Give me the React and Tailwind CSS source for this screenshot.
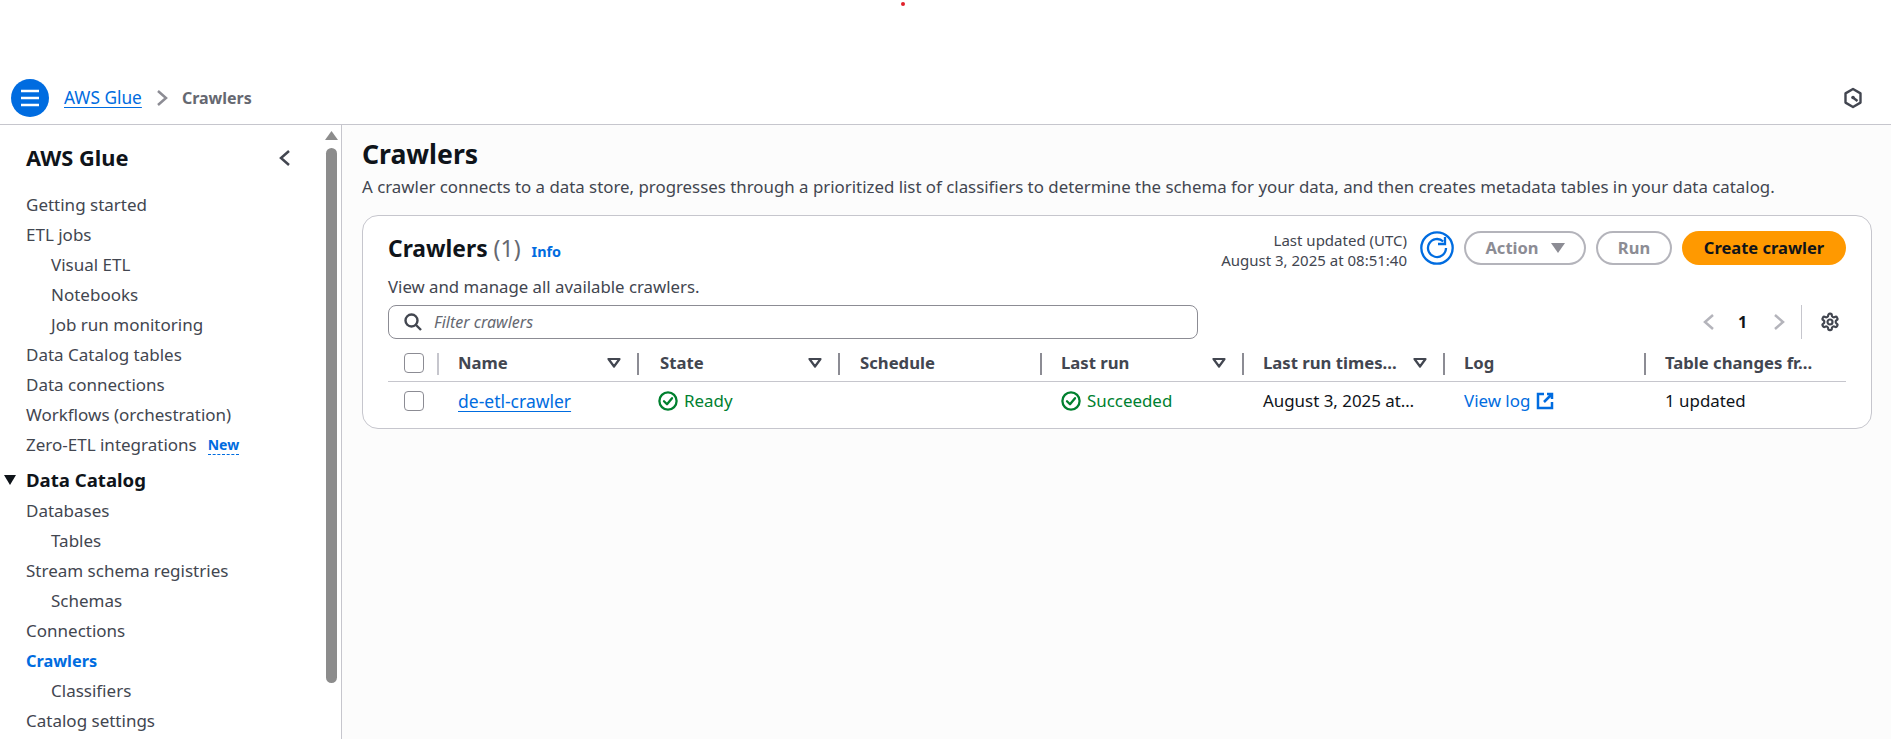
import React from "react";

const navTop = [
  { label: "Getting started" },
  { label: "ETL jobs" },
  { label: "Visual ETL", sub: true },
  { label: "Notebooks", sub: true },
  { label: "Job run monitoring", sub: true },
  { label: "Data Catalog tables" },
  { label: "Data connections" },
  { label: "Workflows (orchestration)" },
];

const navCatalog = [
  { label: "Databases" },
  { label: "Tables", sub: true },
  { label: "Stream schema registries" },
  { label: "Schemas", sub: true },
  { label: "Connections" },
  { label: "Crawlers", active: true },
  { label: "Classifiers", sub: true },
  { label: "Catalog settings" },
];

const columns = [
  { label: "Name", width: "w-[200px]", pad: "pl-[19px]", sort: true, light: true },
  { label: "State", width: "w-[201px]", pad: "pl-[21px]", sort: true },
  { label: "Schedule", width: "w-[202px]", pad: "pl-[20px]" },
  { label: "Last run", width: "w-[202px]", pad: "pl-[19px]", sort: true },
  { label: "Last run times…", width: "w-[201px]", pad: "pl-[19px]", sort: true },
  { label: "Log", width: "w-[201px]", pad: "pl-[19px]" },
  { label: "Table changes fr…", width: "w-[202px]", pad: "pl-[19px]" },
];

function NavItem({ item }) {
  return (
    <div
      className={`h-[30px] leading-[30px] whitespace-nowrap ${item.sub ? "pl-[51px]" : "pl-[26px]"} ${
        item.active ? "text-[16.3px] font-bold text-[#006ce0]" : "text-[17px] text-[#424650]"
      }`}
    >
      {item.label}
    </div>
  );
}

function Sep({ light }) {
  return <div className={`w-[2px] h-[22px] shrink-0 ${light ? "bg-[#c6c6cd]" : "bg-[#8c8c94]"}`} />;
}

function SortCaret() {
  return (
    <svg width="16" height="16" viewBox="0 0 16 16" className="shrink-0">
      <path d="M2.5 4h11L8 11.5z" fill="none" stroke="#424650" strokeWidth="2.2" strokeLinejoin="round" />
    </svg>
  );
}

function StatusOk({ children }) {
  return (
    <span className="flex items-center gap-[6px] text-[#00802f]">
      <svg width="20" height="20" viewBox="0 0 20 20" fill="none" stroke="#00802f" strokeWidth="2.3">
        <circle cx="10" cy="10" r="8.6" />
        <path d="M6 10.2l3 3 5-6" strokeLinecap="round" strokeLinejoin="round" />
      </svg>
      {children}
    </span>
  );
}

function Checkbox() {
  return <div className="w-5 h-5 rounded-[4px] border border-[#8c8c94] bg-white" />;
}

export default function App() {
  return (
    <div className="relative h-screen flex flex-col overflow-hidden bg-white font-['Noto_Sans',sans-serif] text-[#0f141a]">
      <div className="absolute left-[901px] top-[2px] w-1 h-1 rounded-full bg-[#e0202a]" />
      <div className="h-[72px] shrink-0" />

      <header className="h-[53px] shrink-0 flex items-center border-b border-[#c6c6cd] pl-[11px] pr-[28px]">
        <div className="w-[38px] h-[38px] rounded-full bg-[#006ce0] flex items-center justify-center">
          <svg width="18" height="18" viewBox="0 0 18 18" fill="none" stroke="white" strokeWidth="2.4">
            <path d="M0 2h18M0 9h18M0 16h18" />
          </svg>
        </div>
        <a className="ml-[15px] text-[17.3px] text-[#006ce0] underline underline-offset-[3px]">AWS Glue</a>
        <svg width="16" height="20" viewBox="0 0 16 20" fill="none" stroke="#8c8c94" strokeWidth="2.5" className="ml-[13px]">
          <path d="M3 3l8 7-8 7" />
        </svg>
        <span className="ml-[11px] text-base font-bold text-[#656871]">Crawlers</span>
        <svg width="20" height="22" viewBox="0 0 20 22" fill="none" stroke="#424650" strokeWidth="2.4" className="ml-auto">
          <path d="M10 2l7.5 4.4v9.2L10 20l-7.5-4.4V6.4z" strokeLinejoin="round" />
          <circle cx="10" cy="10.5" r="1.8" fill="#424650" stroke="none" />
          <path d="M10.5 11l4 3" />
        </svg>
      </header>

      <div className="flex-1 flex min-h-0">
        <nav className="w-[342px] shrink-0 flex border-r border-[#c6c6cd]">
          <div className="flex-1 min-w-0 pt-[16px]">
            <div className="flex items-center justify-between pl-[26px] pr-[31px] h-[34px]">
              <span className="text-[21.8px] font-bold">AWS Glue</span>
              <svg width="16" height="18" viewBox="0 0 16 18" fill="none" stroke="#424650" strokeWidth="2.5">
                <path d="M12 2L4 9l8 7" />
              </svg>
            </div>
            <div className="mt-[15px]">
              {navTop.map((item) => (
                <NavItem key={item.label} item={item} />
              ))}
              <div className="h-[30px] leading-[30px] text-[17px] pl-[26px] text-[#424650] flex items-center whitespace-nowrap">
                Zero-ETL integrations
                <span className="ml-[11px] text-sm font-bold text-[#006ce0] border-b border-dashed border-[#006ce0] leading-[18px]">
                  New
                </span>
              </div>
            </div>
            <div className="relative h-[32px] flex items-center pl-[26px] mt-[4px] text-[18.6px] font-bold">
              <svg width="12" height="10" viewBox="0 0 12 10" className="absolute left-[4px] top-[11px]" fill="#0f141a">
                <path d="M0 0h12L6 10z" />
              </svg>
              Data Catalog
            </div>
            {navCatalog.map((item) => (
              <NavItem key={item.label} item={item} />
            ))}
          </div>
          <div className="w-[15px] mr-[2px] shrink-0 flex flex-col items-center pt-[6px]">
            <svg width="13" height="9" viewBox="0 0 13 9" fill="#8c8c8c">
              <path d="M6.5 0l6.5 9H0z" />
            </svg>
            <div className="w-[11px] h-[535px] mt-[8px] rounded-[6px] bg-[#8c8c8c]" />
          </div>
        </nav>

        <main className="flex-1 min-w-0 bg-[#fcfcfc] pl-[20px] pr-[19px]">
          <h1 className="mt-[9px] text-[26.6px] leading-[40px] font-bold">Crawlers</h1>
          <p className="text-[16.85px] leading-[26px] text-[#424650] whitespace-nowrap">
            A crawler connects to a data store, progresses through a prioritized list of classifiers to determine the
            schema for your data, and then creates metadata tables in your data catalog.
          </p>
          <section className="mt-[15px] h-[214px] rounded-[16px] border border-[#c6c6cd] bg-white pl-[25px] pr-[25px] pt-[15px]">
            <div className="flex h-[46px]">
              <div className="flex items-baseline h-[32px]">
                <h2 className="text-[22.8px] leading-[32px] font-bold">Crawlers</h2>
                <span className="ml-[6px] text-[23px] text-[#656871]">(1)</span>
                <span className="ml-[11px] text-[14.4px] font-bold text-[#006ce0]">Info</span>
              </div>
              <div className="ml-auto flex items-start">
                <div className="-mt-px text-[15px] leading-[20px] text-[#424650] text-right whitespace-nowrap">
                  <div>Last updated (UTC)</div>
                  <div>August 3, 2025 at 08:51:40</div>
                </div>
                <svg width="34" height="34" viewBox="0 0 34 34" fill="none" stroke="#006ce0" className="ml-[13px]">
                  <circle cx="17" cy="17" r="15.7" strokeWidth="2.3" />
                  <path d="M26 17a9 9 0 1 1-2.8-6.5" strokeWidth="2.3" />
                  <path d="M25 6v7h-7" strokeWidth="2.3" />
                </svg>
                <div className="ml-[10px] w-[122px] h-[34px] rounded-full border-2 border-[#b4b4bb] flex items-center justify-center gap-[12px] text-[16.5px] font-bold text-[#8c8c94]">
                  Action
                  <svg width="14" height="10" viewBox="0 0 14 10" fill="#8c8c94">
                    <path d="M0 0h14L7 10z" />
                  </svg>
                </div>
                <div className="ml-[10px] w-[76px] h-[34px] rounded-full border-2 border-[#b4b4bb] flex items-center justify-center text-[16.5px] font-bold text-[#8c8c94]">
                  Run
                </div>
                <div className="ml-[10px] w-[164px] h-[34px] rounded-full bg-[#ff9900] flex items-center justify-center text-[16.5px] font-bold">
                  Create crawler
                </div>
              </div>
            </div>

            <p className="text-[16.8px] leading-[20px] text-[#424650]">View and manage all available crawlers.</p>

            <div className="flex items-center mt-[8px] h-[34px]">
              <div className="w-[810px] h-[34px] rounded-[8px] border border-[#8c8c94] bg-white flex items-center pl-[15px]">
                <svg width="18" height="18" viewBox="0 0 18 18" fill="none" stroke="#424650" strokeWidth="2.4">
                  <circle cx="7.5" cy="7.5" r="6" />
                  <path d="M12 12l5 5" />
                </svg>
                <span className="ml-[12px] text-base italic text-[#656871]">Filter crawlers</span>
              </div>
              <div className="ml-auto flex items-center">
                <svg width="12" height="18" viewBox="0 0 12 18" fill="none" stroke="#b4b4bb" strokeWidth="2.5">
                  <path d="M10 2L2 9l8 7" />
                </svg>
                <span className="ml-[23px] w-[10px] text-base font-bold">1</span>
                <svg width="12" height="18" viewBox="0 0 12 18" fill="none" stroke="#b4b4bb" strokeWidth="2.5" className="ml-[25px]">
                  <path d="M2 2l8 7-8 7" />
                </svg>
                <div className="ml-[16px] w-px h-[34px] bg-[#c6c6cd]" />
                <svg width="20" height="20" viewBox="0 0 24 24" fill="none" stroke="#424650" strokeWidth="2.6" strokeLinejoin="round" className="ml-[18px] mr-[6px]">
                  <path d="M12.2 2h-.4a2 2 0 0 0-2 2v.2a2 2 0 0 1-1 1.7l-.4.2a2 2 0 0 1-2 0l-.2-.1a2 2 0 0 0-2.7.7l-.2.4a2 2 0 0 0 .7 2.7l.2.1a2 2 0 0 1 1 1.7v.5a2 2 0 0 1-1 1.7l-.2.1a2 2 0 0 0-.7 2.7l.2.4a2 2 0 0 0 2.7.7l.2-.1a2 2 0 0 1 2 0l.4.2a2 2 0 0 1 1 1.7v.2a2 2 0 0 0 2 2h.4a2 2 0 0 0 2-2v-.2a2 2 0 0 1 1-1.7l.4-.2a2 2 0 0 1 2 0l.2.1a2 2 0 0 0 2.7-.7l.2-.4a2 2 0 0 0-.7-2.7l-.2-.1a2 2 0 0 1-1-1.7v-.5a2 2 0 0 1 1-1.7l.2-.1a2 2 0 0 0 .7-2.7l-.2-.4a2 2 0 0 0-2.7-.7l-.2.1a2 2 0 0 1-2 0l-.4-.2a2 2 0 0 1-1-1.7V4a2 2 0 0 0-2-2z" />
                  <circle cx="12" cy="12" r="3" />
                </svg>
              </div>
            </div>

            <div className="mt-[14px] flex h-[29px] border-b border-[#c6c6cd] items-start">
              <div className="w-[49px] shrink-0 pl-[16px]">
                <Checkbox />
              </div>
              {columns.map((col) => (
                <div key={col.label} className={`${col.width} shrink-0 flex items-start`}>
                  <Sep light={col.light} />
                  <div className={`flex-1 min-w-0 flex items-center justify-between ${col.pad} pr-[15px] h-[20px] text-[16.7px] font-bold text-[#424650] whitespace-nowrap`}>
                    {col.label}
                    {col.sort ? <SortCaret /> : null}
                  </div>
                </div>
              ))}
            </div>

            <div className="flex items-center h-[38px] text-[16.9px]">
              <div className="w-[49px] shrink-0 pl-[16px]">
                <Checkbox />
              </div>
              <div className="w-[200px] shrink-0 pl-[21px]">
                <a className="text-[17.5px] text-[#006ce0] underline underline-offset-[3px]">de-etl-crawler</a>
              </div>
              <div className="w-[201px] shrink-0 pl-[21px]">
                <StatusOk>Ready</StatusOk>
              </div>
              <div className="w-[202px] shrink-0" />
              <div className="w-[202px] shrink-0 pl-[21px]">
                <StatusOk>Succeeded</StatusOk>
              </div>
              <div className="w-[201px] shrink-0 pl-[21px] whitespace-nowrap">August 3, 2025 at…</div>
              <div className="w-[201px] shrink-0 pl-[21px] flex items-center gap-[6px] text-[#006ce0]">
                View log
                <svg width="18" height="18" viewBox="0 0 18 18" fill="none" stroke="#006ce0" strokeWidth="2.5">
                  <path d="M8 2H2v14h14v-6M11 2h5v5M16 2L8 10" />
                </svg>
              </div>
              <div className="w-[202px] shrink-0 pl-[21px]">1 updated</div>
            </div>
          </section>
        </main>
      </div>
    </div>
  );
}
